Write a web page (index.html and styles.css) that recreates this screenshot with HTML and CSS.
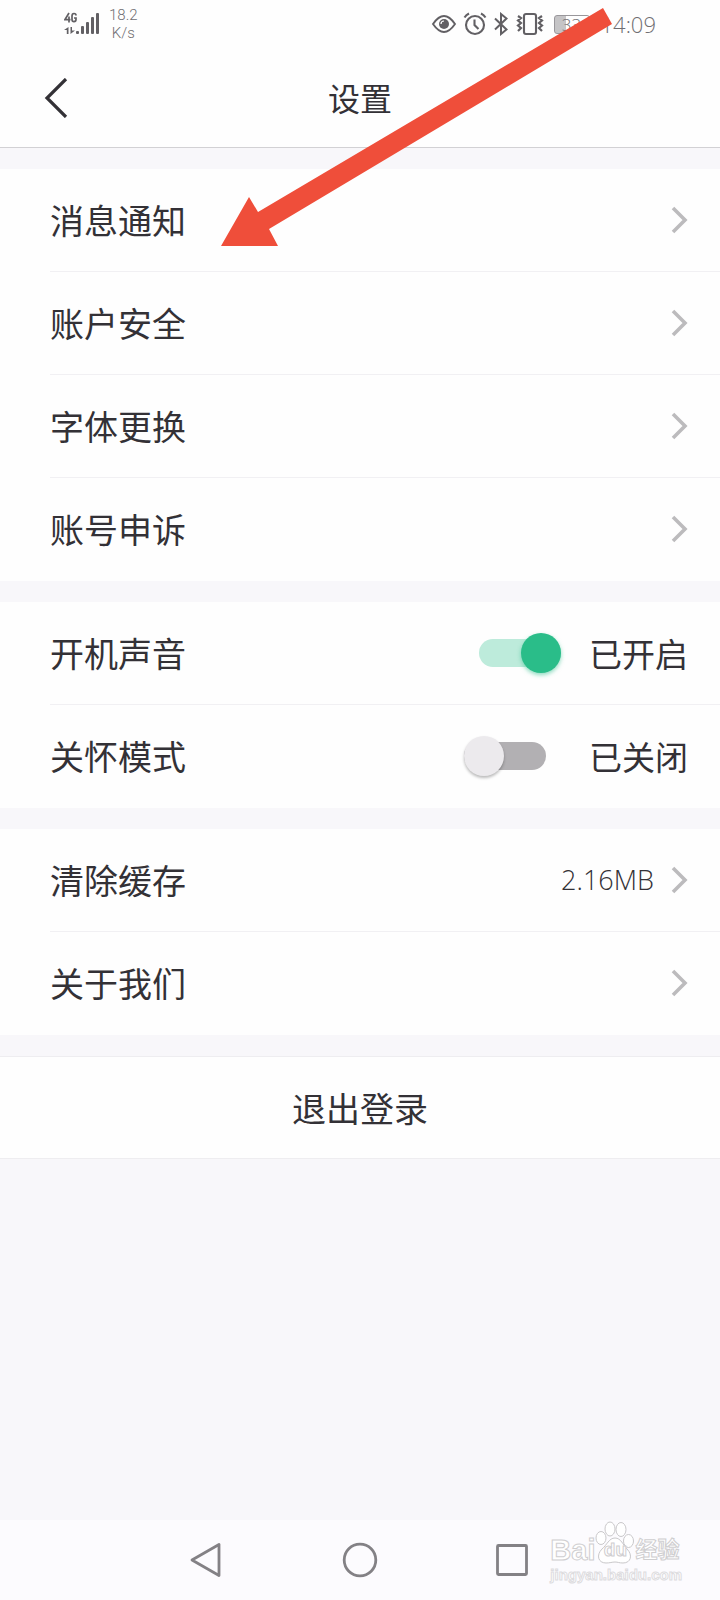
FILE: index.html
```html
<!DOCTYPE html>
<html lang="zh-CN">
<head>
<meta charset="utf-8">
<meta name="viewport" content="width=device-width, initial-scale=1">
<title>设置</title>
<link rel="stylesheet" href="styles.css">
</head>
<body>
<svg class="defs" width="0" height="0" aria-hidden="true">
  <symbol id="chevron" viewBox="0 0 16 28"><path d="M2 2 L14 14 L2 26" fill="none" stroke="currentColor" stroke-width="3.6"/></symbol>
</svg>
<div class="screen">
  <div class="status">
    <div class="status-left">
      <svg class="signal" width="36" height="24" viewBox="0 0 36 24" role="img" aria-label="4G">
        <g fill="none" stroke="#626064" stroke-width="1.7">
          <path d="M5 1 L1 7.6 H6.5 M5 4.500 V10.500"/>
          <path d="M12 3.500 Q12 1.500 10 1.500 Q8 1.500 8 4 V7.500 Q8 9.600 10 9.600 Q12 9.600 12 7.600 V6 H10"/>
        </g>
        <path d="M4.500 15 V22 H2.800 V18 H0 Z M6.500 15 H8 V18.500 H11 L6.500 22 Z" fill="#626064"/>
        <g fill="#626064"><rect x="12" y="19" width="3" height="3" rx="1"/><rect x="17" y="14" width="3" height="8" rx="1"/><rect x="22" y="10" width="3" height="12" rx="1"/><rect x="27" y="5" width="3" height="17" rx="1"/><rect x="32" y="1" width="3" height="21" rx="1"/></g>
      </svg>
      <div class="speed"><span>18.2</span><span>K/s</span></div>
    </div>
    <div class="status-right">
      <svg width="26" height="24" viewBox="0 0 26 24" aria-hidden="true"><path d="M2 12 Q13 -4 24 12 Q13 28 2 12Z" fill="none" stroke="#626064" stroke-width="1.9"/><circle cx="13" cy="12" r="5" fill="#626064"/><path d="M10 12 Q10 9 13 9" fill="none" stroke="#fff" stroke-width="1.2"/></svg>
      <svg width="24" height="24" viewBox="0 0 24 24" aria-hidden="true"><g fill="none" stroke="#626064" stroke-width="2.1"><circle cx="12" cy="13" r="9"/><path d="M1.500 5.500 Q3 3 6 1.500 M18 1.500 Q21 3 22.500 5.500 M11.500 7.500 V13 L15.500 17"/></g></svg>
      <svg width="16" height="24" viewBox="0 0 16 24" aria-hidden="true"><path d="M2 6.500 L13.500 17.500 L8 22 V2 L13.500 6.500 L2 17.500" fill="none" stroke="#626064" stroke-width="2"/></svg>
      <svg width="30" height="24" viewBox="0 0 30 24" aria-hidden="true"><g fill="none" stroke="#626064" stroke-width="2.1"><rect x="9" y="2" width="12" height="20" rx="2"/><path d="M3 4 L6 6 L3 8.500 L6 11 L3 13.500 L6 16 L3 19 M27 4 L24 6 L27 8.500 L24 11 L27 13.500 L24 16 L27 19" stroke-width="2.200"/></g></svg>
      <span class="battery">33</span>
      <time class="clock">14:09</time>
    </div>
  </div>
  <header class="header">
    <button class="back" aria-label="返回"><svg width="24" height="40" viewBox="0 0 24 40" aria-hidden="true"><path d="M22 1 L3 20 L22 39" fill="none" stroke="#333136" stroke-width="3.200"/></svg></button>
    <h1 class="title">设置</h1>
  </header>
  <main class="main">
    <nav class="group">
      <a class="row" href="#"><span class="label">消息通知</span><svg class="chevron"><use href="#chevron"/></svg></a>
      <a class="row" href="#"><span class="label">账户安全</span><svg class="chevron"><use href="#chevron"/></svg></a>
      <a class="row" href="#"><span class="label">字体更换</span><svg class="chevron"><use href="#chevron"/></svg></a>
      <a class="row" href="#"><span class="label">账号申诉</span><svg class="chevron"><use href="#chevron"/></svg></a>
    </nav>
    <div class="group">
      <label class="row"><span class="label">开机声音</span><input class="switch" type="checkbox" role="switch" checked><span class="state">已开启</span></label>
      <label class="row"><span class="label">关怀模式</span><input class="switch" type="checkbox" role="switch"><span class="state">已关闭</span></label>
    </div>
    <nav class="group">
      <a class="row" href="#"><span class="label">清除缓存</span><span class="value">2.16MB</span><svg class="chevron"><use href="#chevron"/></svg></a>
      <a class="row" href="#"><span class="label">关于我们</span><svg class="chevron"><use href="#chevron"/></svg></a>
    </nav>
    <button class="logout">退出登录</button>
  </main>
  <footer class="navbar">
    <button class="key" aria-label="返回"><svg width="36" height="36" viewBox="0 0 36 36"><path d="M29 2.500 V33.500 L2 18Z"/></svg></button>
    <button class="key" aria-label="主页"><svg width="36" height="36" viewBox="0 0 36 36"><circle cx="18" cy="18" r="15.800"/></svg></button>
    <button class="key" aria-label="最近任务"><svg width="36" height="36" viewBox="0 0 36 36"><rect x="3.500" y="3.500" width="29" height="29" rx="1"/></svg></button>
  </footer>
  <div class="watermark">
    <div class="brand"><span>Bai</span><span class="paw"><svg width="40" height="44" viewBox="0 0 40 44" aria-hidden="true"><g fill="#fff" stroke="#c9c8ca"><ellipse cx="6" cy="17" rx="5" ry="6.500"/><ellipse cx="15" cy="8" rx="5" ry="7"/><ellipse cx="26" cy="8.500" rx="5" ry="7"/><ellipse cx="33.500" cy="20" rx="5" ry="6.500"/><path d="M20 17 C26 17 28 24 32 28 C38 34 36 42 28 42 C24 42 23 41 20 41 C17 41 15 42 11 42 C3 42 1 34 7 28 C12 24 14 17 20 17Z"/></g></svg><span class="du">du</span></span><span class="jy">经验</span></div>
    <div class="site">jingyan.baidu.com</div>
  </div>
  <svg class="arrow" width="396" height="242" viewBox="0 0 396 242" aria-hidden="true"><path d="M382 0 L391 16 L48 221 L57 238 H0 L28 189 L37 204Z" fill="#ef4e3a"/></svg>
</div>
</body>
</html>
```
FILE: styles.css
```css
* { box-sizing: border-box; }
body { margin: 0; background: #f8f7fa; color: #333136; font-family: "Noto Sans CJK SC", sans-serif; }
button { border: 0; padding: 0; background: none; color: inherit; font: inherit; }
svg { display: block; flex: none; }
.defs { position: absolute; }
.screen { position: relative; min-height: 100vh; display: flex; flex-direction: column; }
.status { height: 48px; padding: 0 64px; background: #fefefe; display: flex; justify-content: space-between; align-items: center; color: #706e72; }
.status-left, .status-right { display: flex; align-items: center; }
.status-left { gap: 9px; }
.status-right { gap: 6px; }
.speed { display: flex; flex-direction: column; align-items: center; font: 300 15px/18px Roboto, sans-serif; }
.battery { width: 36px; height: 19px; margin: 0 5px 0 3px; border: 1px solid #99979b; border-radius: 3px; background: linear-gradient(90deg, #c5c4c6 33%, #fefefe 33%); font: 300 17px/17px "Open Sans", sans-serif; text-align: center; }
.clock { font: 300 22px/30px "Open Sans", sans-serif; }
.header { height: 100px; padding: 0 44px; background: #fefefe; border-bottom: 1px solid #d2d1d4; display: grid; grid-template-columns: 24px 1fr 24px; align-items: center; }
.title { margin: 0; padding-bottom: 2px; font-size: 32px; font-weight: 400; line-height: 48px; text-align: center; }
.main { flex: 1; padding-top: 21px; display: flex; flex-direction: column; gap: 21px; }
.group { background: #fefefe; }
.row { height: 103px; margin-left: 50px; padding-right: 32px; border-bottom: 1px solid #f1f0f3; display: flex; align-items: center; color: inherit; text-decoration: none; }
.row:last-child { border-bottom-color: transparent; }
.label { flex: 1; font-size: 34px; line-height: 50px; }
.chevron { width: 18px; height: 28px; color: #bcbbbd; }
.value { margin-right: 16px; font: 300 27px/40px "Open Sans", sans-serif; }
.state { margin-left: 28px; font-size: 33px; line-height: 50px; }
.switch { appearance: none; position: relative; width: 82px; height: 28px; margin: 0; border-radius: 14px; background: #bdebdb; }
.switch::before { content: ""; position: absolute; right: 0; top: -6px; width: 40px; height: 40px; border-radius: 50%; background: #2abd89; box-shadow: 0 2px 4px #2abd8988; }
.switch:not(:checked) { margin-right: 15px; background: #b2b0b3; }
.switch:not(:checked)::before { right: auto; left: 0; background: #eceaed; box-shadow: 0 2px 3px #00000044; }
.logout { height: 103px; border: 1px solid #eeedf0; border-width: 1px 0; background: #fefefe; font-size: 34px; }
.navbar { height: 80px; background: #fcfbfe; display: flex; justify-content: center; align-items: center; gap: 116px; }
.key svg { fill: none; stroke: #838185; stroke-width: 2.8; stroke-linejoin: round; }
.watermark { position: absolute; right: 38px; bottom: 15px; color: #fff; font-family: "Liberation Sans", "Noto Sans CJK SC", sans-serif; font-weight: 700; -webkit-text-stroke: 1px #cfced0; }
.brand { display: flex; align-items: flex-end; font-size: 29px; line-height: 30px; }
.paw { position: relative; }
.du { position: absolute; left: 0; right: 0; bottom: 0; font-size: 19px; text-align: center; }
.jy { font-size: 22px; }
.site { font-size: 15px; line-height: 20px; -webkit-text-stroke-color: #dddcdf; }
.arrow { position: absolute; left: 221px; top: 8px; }
```
